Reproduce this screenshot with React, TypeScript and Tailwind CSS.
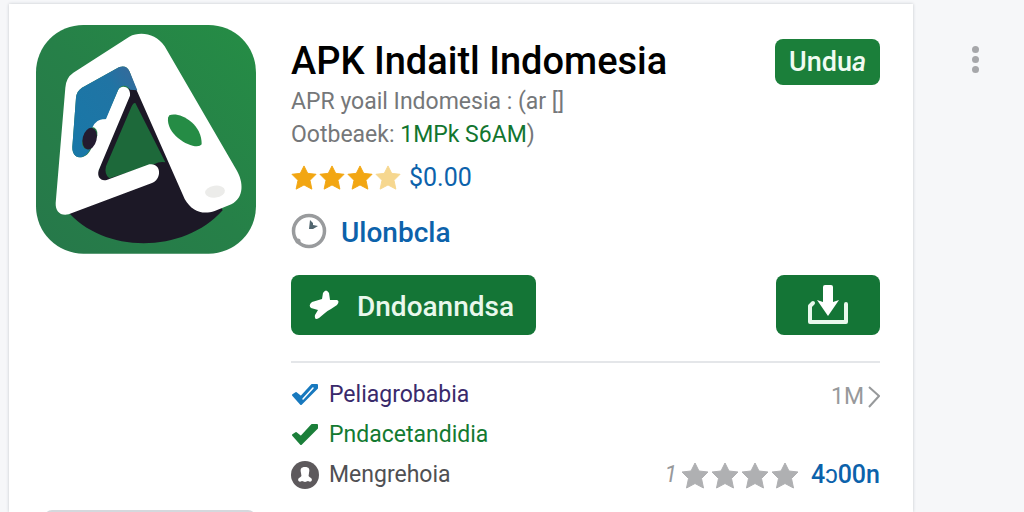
function AppLogo() {
  return (
    <svg viewBox="48 44 660 686" className="w-full" role="img" aria-label="APK">
      <defs>
        <linearGradient id="tile" x1="0" y1="1" x2="1" y2="0">
          <stop offset="0" stopColor="#26784a" />
          <stop offset="0.5" stopColor="#268048" />
          <stop offset="1" stopColor="#258d45" />
        </linearGradient>
        <linearGradient id="pane" x1="0" y1="1" x2="1" y2="0">
          <stop offset="0" stopColor="#1878a8" />
          <stop offset="0.7" stopColor="#2074a4" />
          <stop offset="1" stopColor="#3a6798" />
        </linearGradient>
      </defs>
      <rect x="48" y="44" width="660" height="686" rx="142" fill="url(#tile)" />
      <path d="M140 600C250 732 490 732 608 600L440 250L330 225L236 480Z" fill="#1c1826" />
      <path d="M346 278L436 456Q420 452 402 462L268 504Q252 492 258 468L334 290Q340 276 346 278Z" fill="#1d693a" />
      <path
        fill="#fff"
        d="M160 187L328 79C362 62 408 70 434 108L650 480C670 514 674 562 634 582L584 602C548 614 516 604 494 566L350 240L329 184Q320 163 298 170L186 232Q170 242 168 262L157 410C156 450 196 450 212 418L232 376Q234 350 214 350Q228 322 256 327L294 240C302 220 334 228 330 256L236 480C230 502 244 514 262 508L388 462C424 456 428 506 394 519L146 612C120 618 106 602 107 578L136 232Q138 202 160 187Z"
      />
      <path d="M186 232L298 170Q320 163 329 184L352 240L330 238C322 222 300 222 294 240L258 326Q230 324 218 350Q190 362 186 400Q190 420 210 416C196 450 156 450 157 410L168 262Q170 242 186 232Z" fill="url(#pane)" />
      <ellipse cx="209" cy="385" rx="21" ry="33" transform="rotate(14 209 385)" fill="#241c30" />
      <path d="M448 315C472 302 546 334 545 402C530 424 438 380 444 322Z" fill="#258c45" />
      <ellipse cx="585" cy="544" rx="30" ry="18" transform="rotate(-8 585 544)" fill="#ececea" />
    </svg>
  );
}

function Star({ className }: { className: string }) {
  return (
    <svg viewBox="0 0 28 27" className={className} fill="currentColor" aria-hidden="true">
      <path d="M14 1L18 9L27 10L20.500 16.500L22.500 26L14 21.500L5.500 26L7.500 16.500L1 10L10 9Z" stroke="currentColor" strokeLinejoin="round" />
    </svg>
  );
}

function ClockIcon() {
  return (
    <svg viewBox="0 0 36 36" className="size-9" aria-hidden="true">
      <circle cx="18" cy="18" r="15.500" fill="none" stroke="#999b9d" strokeWidth="3.500" />
      <circle cx="7" cy="28" r="2.600" fill="#999b9d" />
      <path d="M19 7L22 10L22 12L27 13L22 16L18 16Z" fill="#52666f" />
    </svg>
  );
}

function PlaneIcon() {
  return (
    <svg viewBox="0 0 30 30" className="w-[30px]" aria-hidden="true">
      <path d="M14 3Q17 -2 20 3L21 10L28 10Q31 11 28 15L22 19Q18 21 16 23L10 28Q5 31 6 25L9 20L2 18Q-1 15 3 12L13 9Z" fill="#fff" />
    </svg>
  );
}

function TrayIcon() {
  return (
    <svg viewBox="0 0 42 40" className="w-[42px]" aria-hidden="true">
      <path d="M6 18L3 21V37H39V19" fill="none" stroke="#e9f8ec" strokeWidth="4" strokeLinejoin="round" strokeLinecap="round" />
      <path d="M18 0H24Q26 0 26 2V17L32 15L21 31L10 15L16 17V2Q16 0 18 0Z" fill="#fff" />
    </svg>
  );
}

function CheckIcon({ color, hollow = false }: { color: string; hollow?: boolean }) {
  return (
    <svg viewBox="0 0 28 24" className="w-7" aria-hidden="true">
      <path d="M2 12L5 10L10 14L21 2L26 2L26 5L10 21Z" fill={color} stroke={color} strokeWidth="2" strokeLinejoin="round" />
      {hollow && <path d="M12 16L22 5" stroke="#fff" strokeWidth="1.500" strokeLinecap="round" />}
    </svg>
  );
}

function PersonIcon() {
  return (
    <svg viewBox="0 0 28 28" className="w-7" aria-hidden="true">
      <circle cx="14" cy="14" r="14" fill="#5d595c" />
      <path d="M14 6C18 6 19 8 18 12Q17 15 18.500 16Q21 17 21 19Q20 22 17 20L14 21L11 20Q8 22 7 19Q7 17 9.500 16Q11 15 10 12C9 8 10 6 14 6Z" fill="#fff" />
    </svg>
  );
}

export default function App() {
  return (
    <div className="flex h-screen overflow-hidden bg-[#f6f7f9] pt-1 pl-[9px] font-[Roboto,sans-serif]">
      <main className="flex min-w-0 flex-1 gap-[35px] bg-white pt-[21px] pr-[33px] pl-[27px] shadow-[0_0_3px_#c4c8cc]">
        <div className="w-[220px] shrink-0">
          <AppLogo />
          <div className="mt-64 ml-2 h-12 rounded-lg border-2 border-[#d5d8dd]" />
        </div>

        <div className="min-w-0 flex-1 pt-[14px]">
          <header className="flex items-start justify-between">
            <h1 className="text-[38px] leading-[44px] font-medium whitespace-nowrap text-black">APK Indaitl Indomesia</h1>
            <button className="h-[46px] w-[105px] rounded-lg bg-[#1b7f3a] text-[27px] font-medium text-[#f0fbf2]">
              Undu<i>a</i>
            </button>
          </header>
          <p className="text-[23px] leading-[33px] text-[#757779]">APR yoail Indomesia : (ar []</p>
          <p className="text-[23px] leading-[33px] text-[#757779]">
            Ootbeaek: <span className="text-[#12752f]">1MPk S6AM</span>)
          </p>

          <div className="mt-3 flex h-[30px] items-center">
            <div className="flex gap-[2px] text-[#f2a612]" role="img" aria-label="3.5">
              <Star className="w-[26px]" />
              <Star className="w-[26px]" />
              <Star className="w-[26px]" />
              <Star className="w-[26px] text-[#f6d78f]" />
            </div>
            <span className="ml-2 text-[25px] text-[#0c62ab]">$0.00</span>
          </div>

          <a href="#developer" className="mt-5 flex h-9 items-center gap-[14px] text-[28px] font-medium text-[#0c62ab]">
            <ClockIcon />
            <span className="pt-1">Ulonbcla</span>
          </a>

          <div className="mt-[26px] flex justify-between">
            <button className="flex h-[60px] w-[245px] items-center gap-[18px] rounded-lg bg-[#147536] pl-[18px] text-[28px] font-medium text-[#e9f8ec]">
              <PlaneIcon />
              <span className="pt-1">Dndoanndsa</span>
            </button>
            <button aria-label="Download" className="flex h-[60px] w-[104px] items-center justify-center rounded-lg bg-[#147536]">
              <TrayIcon />
            </button>
          </div>

          <ul className="mt-[26px] border-t-2 border-[#e4e6e9] pt-3 text-[23px]">
            <li className="flex h-10 items-center gap-[10px] text-[#392a6b]">
              <CheckIcon color="#1879be" hollow />
              Peliagrobabia
              <span className="ml-auto flex items-center pt-1 text-[#97999b]">
                1M
                <svg viewBox="0 0 12 22" className="ml-1 w-3" aria-hidden="true">
                  <path d="M1 1L11 10L1 21" fill="none" stroke="#97999b" strokeWidth="2" />
                </svg>
              </span>
            </li>
            <li className="flex h-10 items-center gap-[10px] text-[#137a31]">
              <CheckIcon color="#1b7f3a" />
              Pndacetandidia
            </li>
            <li className="flex h-10 items-center gap-[10px] text-[#505053]">
              <PersonIcon />
              Mengrehoia
              <span className="ml-auto flex items-center text-[#afb0b2]">
                <i className="mr-1 text-[#97999b]">1</i>
                <span className="flex items-center gap-[2px]">
                  <Star className="w-7" />
                  <Star className="w-7" />
                  <Star className="w-7" />
                  <Star className="w-7" />
                </span>
                <span className="ml-3 text-[25px] font-medium text-[#0c62ab]">4ɔ00n</span>
              </span>
            </li>
          </ul>
        </div>
      </main>

      <aside className="w-[111px] shrink-0 pl-[46px]">
        <button aria-label="More" className="mt-[42px] flex w-8 flex-col items-center gap-[3px]">
          <span className="size-[7px] rounded-full bg-[#a6a7aa]" />
          <span className="size-[7px] rounded-full bg-[#a6a7aa]" />
          <span className="size-[7px] rounded-full bg-[#a6a7aa]" />
        </button>
      </aside>
    </div>
  );
}
